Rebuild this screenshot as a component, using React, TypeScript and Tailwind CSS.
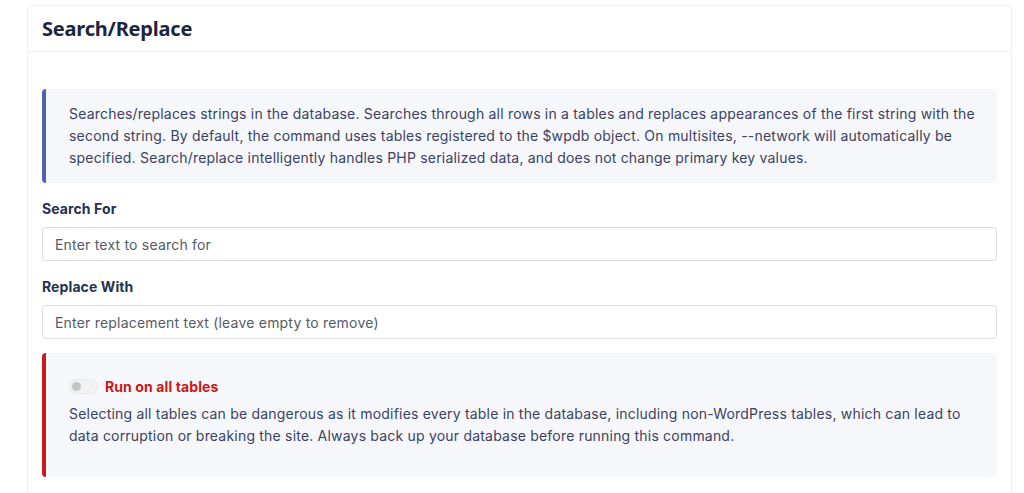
import React from "react";

export default function App() {
  return (
    <div className="min-h-[493px] bg-white pt-[5px] pl-[27px] pr-[12px]" style={{ fontFamily: "Inter, 'Noto Sans', sans-serif" }}>
      <div className="border border-[#f1f2f4] rounded-[3px] bg-white">
        <div className="h-[46px] px-[14px] flex items-center border-b border-[#f1f2f4]">
          <h1 className="text-[20px] font-bold text-[#1d2540] tracking-[-0.2px]" style={{ fontFamily: "'Noto Sans', Inter, sans-serif" }}>
            Search/Replace
          </h1>
        </div>
        <div className="px-[14px] pt-[37px] pb-[20px]">
          <div className="bg-[#f6f7fb] border-l-[4px] border-[#4c63b6] rounded-[4px] pl-[23px] pr-[16px] py-[14px] text-[14px] leading-[22px] tracking-[0.2px] text-[#3b4261]">
            Searches/replaces strings in the database. Searches through all rows in a tables and replaces appearances of the first string with the second string. By default, the command uses tables registered to the $wpdb object. On multisites, --network will automatically be specified. Search/replace intelligently handles PHP serialized data, and does not change primary key values.
          </div>

          <label className="block mt-[16px] text-[14px] leading-[20px] font-bold tracking-[0.1px] text-[#26304f]">Search For</label>
          <input
            className="mt-[8px] w-full h-[34px] border border-[#dcdde1] rounded-[4px] px-[12px] text-[14px] tracking-[0.2px] text-[#333] placeholder:text-[#555b66] outline-none bg-white"
            placeholder="Enter text to search for"
          />

          <label className="block mt-[16px] text-[14px] leading-[20px] font-bold tracking-[0.1px] text-[#26304f]">Replace With</label>
          <input
            className="mt-[8px] w-full h-[34px] border border-[#dcdde1] rounded-[4px] px-[12px] text-[14px] tracking-[0.2px] text-[#333] placeholder:text-[#555b66] outline-none bg-white"
            placeholder="Enter replacement text (leave empty to remove)"
          />

          <div className="mt-[14px] bg-[#f6f7fa] border-l-[4px] border-[#cc1818] rounded-[4px] pl-[23px] pr-[16px] pt-[23px] pb-[30px]">
            <div className="flex items-center gap-[7px] h-[20px]">
              <span className="w-[29px] h-[15px] rounded-full bg-[#f2f2f2] border border-[#e6e6e6] flex items-center pl-[2px]">
                <span className="w-[9px] h-[9px] rounded-full bg-[#c4c4c4]" />
              </span>
              <span className="text-[14px] font-bold tracking-[0.1px] text-[#cc1818]">Run on all tables</span>
            </div>
            <p className="mt-[7px] text-[14px] leading-[22px] tracking-[0.2px] text-[#3b4261]">
              Selecting all tables can be dangerous as it modifies every table in the database, including non-WordPress tables, which can lead to data corruption or breaking the site. Always back up your database before running this command.
            </p>
          </div>
        </div>
      </div>
    </div>
  );
}
